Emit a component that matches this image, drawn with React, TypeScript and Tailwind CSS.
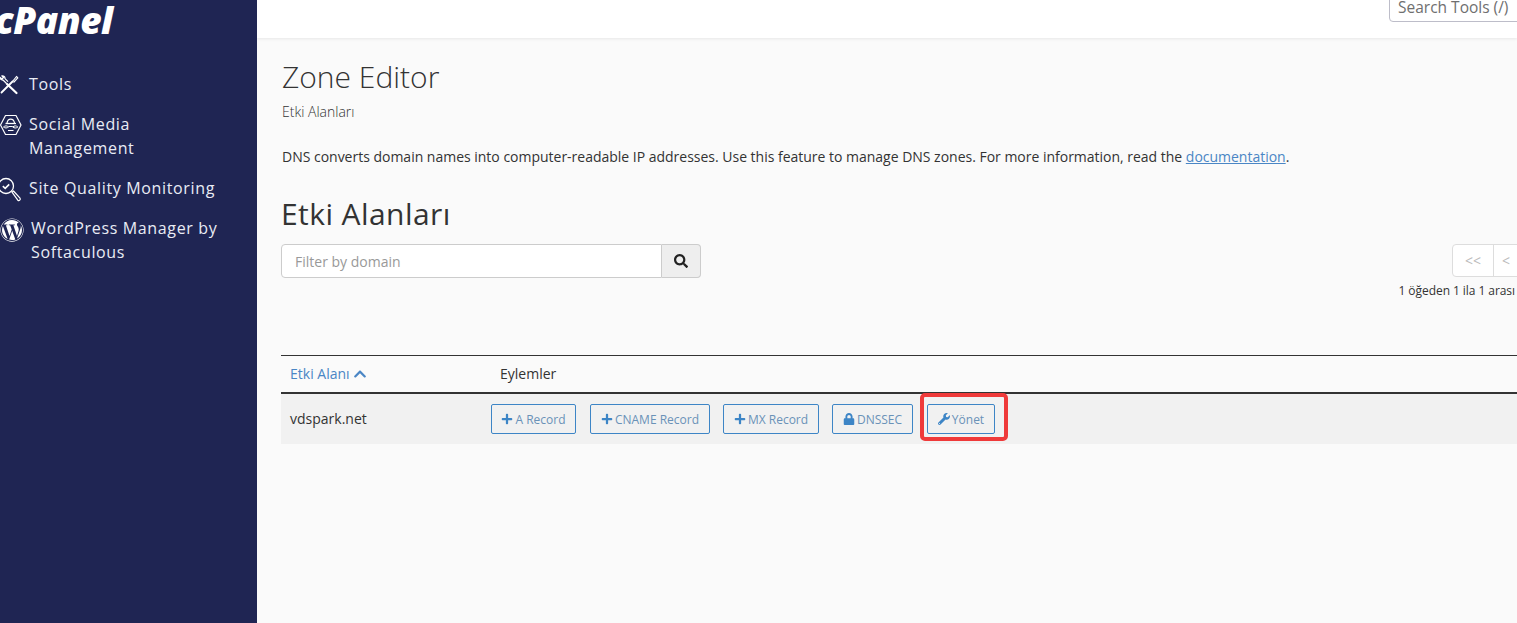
import React from "react";
import { FaPlus, FaLock, FaWrench, FaSearch, FaChevronUp, FaWordpress } from "react-icons/fa";

const font = { fontFamily: '"Open Sans", sans-serif' };

function ToolsIcon() {
  return (
    <svg width="22" height="24" viewBox="0 0 22 24" fill="none" stroke="#fff" className="overflow-visible">
      <path d="M9 12 18.500 21" strokeWidth="2.200" strokeLinecap="round" />
      <path d="M8.500 11.500 5 8C3.300 8.300 2 7 1.800 5.200L4 7l1.500-1.500L3.800 3.800c1.900-.3 3.400 1 3.200 2.900l3 3" strokeWidth="1.200" strokeLinejoin="round" />
      <path d="M3.500 20.500 14.500 9.500" strokeWidth="1.800" strokeLinecap="round" />
      <path d="M14.500 9.500 18.500 4.500 19.800 5.800 15.500 10.500" strokeWidth="1.200" strokeLinejoin="round" />
    </svg>
  );
}

function SocialIcon() {
  return (
    <svg width="22" height="24" viewBox="0 0 22 24" fill="none" stroke="#fff" strokeWidth="1.200" className="overflow-visible">
      <path d="M7.500 3.500h10.500L23 13l-5 9.500H7.500L2.500 13z" strokeLinejoin="round" />
      <path d="M9 11c.5-2.500 2-3.800 3.700-3.800S16 8.500 16.500 11" />
      <path d="M7.500 11.500h10.500" strokeWidth="1.300" />
      <path d="M5.500 15c1.500-1.500 3.500-1.500 5 0-1.500 1.300-3.500 1.300-5 0zM14.800 15c1.500-1.500 3.500-1.500 5 0-1.500 1.300-3.500 1.300-5 0zM10.500 14.500h4.300" strokeWidth="1" />
      <path d="M10 18.500h5.500" strokeWidth="1" />
    </svg>
  );
}

function QualityIcon() {
  return (
    <svg width="22" height="24" viewBox="0 0 22 24" fill="none" stroke="#fff" strokeWidth="1.300" className="overflow-visible">
      <circle cx="8" cy="10" r="7.500" />
      <path d="M4.800 10.200l2.400 2.200 4-4" strokeWidth="1.600" />
      <path d="M14 16.200l1.500-1.200 6.500 7.200a1.500 1.500 0 0 1-2.200 2z" strokeWidth="1.200" strokeLinejoin="round" />
    </svg>
  );
}

function NavItem({ icon, label, itemClass }: { icon: React.ReactNode; label: React.ReactNode; itemClass: string }) {
  return (
    <div className={`flex items-start text-[16px] leading-[24px] font-medium text-[#e9ecf5] tracking-[0.65px] ${itemClass}`}>
      <span className="h-[24px] shrink-0">{icon}</span>
      <span>{label}</span>
    </div>
  );
}

function ActionButton({ icon, label, className }: { icon: React.ReactNode; label: string; className: string }) {
  return (
    <button className={`h-[30px] shrink-0 flex items-center justify-center gap-[2px] border border-[#3d85c6] rounded-[2px] text-[12px] text-[#6a92b8] bg-transparent ${className}`}>
      {icon}
      <span className="pt-[1px]">{label}</span>
    </button>
  );
}

export default function App() {
  return (
    <div style={font} className="flex h-[623px] w-[1517px] overflow-hidden bg-[#fafafa]">
      <aside className="w-[257px] shrink-0 bg-[#1f2553] flex flex-col">
        <div className="h-[38px] overflow-hidden">
          <div className="italic font-extrabold text-white text-[37px] leading-[40px] tracking-[-0.5px] ml-[-5px]">
            cPanel
          </div>
        </div>
        <nav className="flex flex-col gap-[16px] pt-[34px] ml-[-2px]">
          <NavItem itemClass="gap-[9px]" icon={<ToolsIcon />} label="Tools" />
          <NavItem itemClass="gap-[9px]" icon={<SocialIcon />} label={<>Social Media<br />Management</>} />
          <NavItem itemClass="gap-[9px]" icon={<QualityIcon />} label="Site Quality Monitoring" />
          <NavItem itemClass="gap-[7px] ml-[2px]" icon={<FaWordpress className="mt-[2px] text-white text-[24px]" />} label={<>WordPress Manager by<br />Softaculous</>} />
        </nav>
      </aside>

      <div className="flex-1 min-w-0 flex flex-col overflow-hidden">
        <header className="h-[38px] shrink-0 bg-white shadow-[0_1px_3px_rgba(0,0,0,0.08)] flex justify-end items-end pb-[16px] overflow-hidden">
          <div className="w-[142px] h-[34px] shrink-0 mr-[-14px] border border-[#bdbdc9] rounded-[4px] px-2 flex items-end pb-[3px] text-[15.5px] leading-[22px] text-[#6f6f6f] bg-white whitespace-nowrap">
            Search Tools (/)
          </div>
        </header>

        <main className="flex-1 pl-[24px] pt-[19px] overflow-hidden">
          <h1 className="pl-[1px] text-[30px] leading-[40px] font-light text-[#333]">Zone Editor</h1>
          <p className="pl-[1px] mt-[6px] text-[14px] leading-[18px] font-light text-[#333]">Etki Alanları</p>
          <p className="pl-[1px] mt-[26px] text-[14px] leading-[20px] text-[#333] whitespace-nowrap tracking-[-0.012px]">
            DNS converts domain names into computer-readable IP addresses. Use this feature to manage DNS zones. For more information, read the{" "}
            <a className="text-[#4a86c5] underline">documentation</a>.
          </p>

          <h2 className="mt-[27px] text-[30px] leading-[40px] text-[#333] tracking-[0.42px]">Etki Alanları</h2>

          <div className="mt-[10px] flex justify-between items-start">
            <div className="flex w-[420px] h-[34px]">
              <div className="flex-1 bg-white border border-[#ccc] rounded-l-[4px] pl-[13px] text-[14px] leading-[34px] text-[#999]">Filter by domain</div>
              <div className="w-[39px] flex items-center justify-center bg-[#eee] border border-[#ccc] border-l-0 rounded-r-[4px] text-[#222]">
                <FaSearch className="text-[14px]" />
              </div>
            </div>
            <div className="flex flex-col items-end mr-[2px]">
              <div className="flex h-[33px] mr-[-30px] w-[93px] bg-white border border-[#ddd] rounded-l-[4px] text-[14px] text-[#bbb]">
                <div className="w-[41px] border-r border-[#ddd] flex items-center justify-center">&lt;&lt;</div>
                <div className="pl-[8px] flex items-center">&lt;</div>
              </div>
              <div className="mt-[5px] text-[12px] leading-[17px] text-[#333] tracking-[-0.06px]">1 öğeden 1 ila 1 arası</div>
            </div>
          </div>

          <div className="mt-[56px] border-t border-[#333] border-b-2 border-b-[#333] h-[39px] flex items-center text-[14px] pb-[1px]">
            <div className="w-[218px] pl-[9px] flex items-center gap-[3px] text-[#4a86c5]">
              Etki Alanı <FaChevronUp className="text-[14px]" />
            </div>
            <div className="pl-[1px] text-[#333]">Eylemler</div>
          </div>

          <div className="h-[50px] bg-[#f1f1f1] flex items-center">
            <div className="w-[210px] pl-[9px] pb-[1px] text-[14px] text-[#333]">vdspark.net</div>
            <div className="flex items-center">
              <ActionButton className="w-[85px]" icon={<FaPlus className="text-[12px] text-[#3d85c6]" />} label="A Record" />
              <ActionButton className="w-[120px] ml-[14px]" icon={<FaPlus className="text-[12px] text-[#3d85c6]" />} label="CNAME Record" />
              <ActionButton className="w-[96px] ml-[13px]" icon={<FaPlus className="text-[12px] text-[#3d85c6]" />} label="MX Record" />
              <ActionButton className="w-[81px] ml-[13px]" icon={<FaLock className="text-[12px] text-[#3d85c6]" />} label="DNSSEC" />
              <div className="ml-[7px] mb-[4px] w-[88px] h-[48px] border-[4px] border-[#ef3a3a] rounded-[5px] flex items-start pl-[3px] pt-[7px]">
                <ActionButton className="w-[68px]" icon={<FaWrench className="text-[12px] text-[#3d85c6]" />} label="Yönet" />
              </div>
            </div>
          </div>
        </main>
      </div>
    </div>
  );
}
